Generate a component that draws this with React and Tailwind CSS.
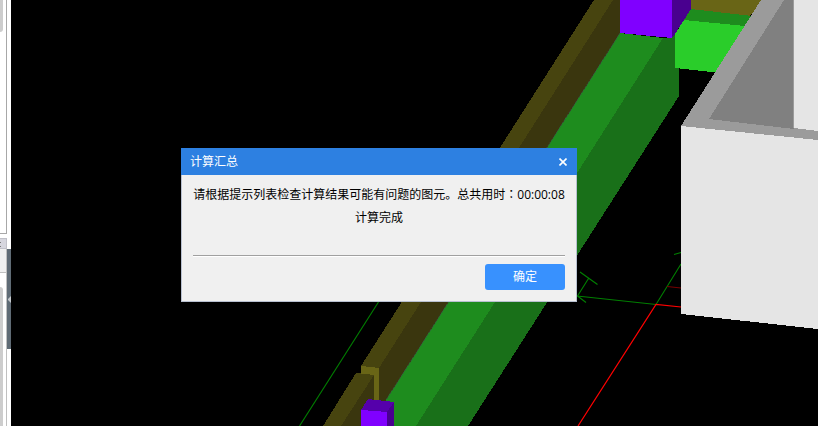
import React, { useState } from 'react';


const SidePanel = () => {
    return (
        <div className="flex w-[11px] shrink-0 bg-white">
            <div className="flex w-[7px] flex-col">
                <div className="h-[234px] border-r border-b border-[#a8a8a8]">
                    <div className="h-8 w-[3px] rounded-br-sm bg-[#cdcdcd]"></div>
                </div>
                <div className="mt-1 h-[11px] border-t border-r border-b border-[#c0c0c8] bg-[#d6d6de]">
                    <div className="mt-[3px] h-px w-px bg-[#777777]"></div>
                    <div className="mt-[3px] h-px w-px bg-[#777777]"></div>
                </div>
                <div className="h-6 border-r border-b border-[#c0c0c0] bg-[#f0f0f0]"></div>
                <div className="grow border-r border-[#c0c0c0] pt-[14px]">
                    <div className="h-full w-[3px] rounded-tr-sm bg-[#cdcdcd]"></div>
                </div>
            </div>
            {/* Splitter */}
            <div className="w-1 pt-[249px]">
                <button aria-label="收起" className="flex h-[100px] w-1 items-center justify-end bg-[#5f6b75]">
                    <svg className="h-[7px] w-[3px]" viewBox="0 0 3 7">
                        <path d="M3 0V7L0 4V3Z" fill="#c4c8cc" />
                    </svg>
                </button>
            </div>
        </div>
    );
};

const Scene = () => {
    return (
        <svg className="min-w-0 grow bg-black" viewBox="11 0 807 426" preserveAspectRatio="xMinYMin slice">
            {/* axes */}
            <g fill="none" stroke="#008000" strokeWidth="1.1">
                <path d="M378.500 302L299.500 426" />
                <path d="M577 296L656 304.500L681 264" />
                <path d="M577.500 296L588.500 278.500M580 272L597.500 284.500M577.500 296L586 302.500M674 254.500L681 252.500" />
            </g>
            <path d="M667 286.500L681 288" stroke="#780000" fill="none" />
            <path d="M681 307L656 304.500L578 426" stroke="#ff0000" strokeWidth="1.200" fill="none" />

            <g shapeRendering="crispEdges">
                {/* long wall */}
                <path d="M594 0H613L379 368L361 366Z" fill="#47440f" />
                <path d="M613 0H620V33L386 401L379 410V368Z" fill="#3a360e" />
                <path d="M361 366L379 368V410H374V376L361 374Z" fill="#696516" />
                <path d="M356 373L374 375L341 426H323Z" fill="#47440f" />
                <path d="M374 375V426H341Z" fill="#3a360e" />

                {/* green beam */}
                <path d="M620 33L663 38L592 150L416 426H370L386 400Z" fill="#1e8c1e" />
                <path d="M663 38L672 37L679 30V96L468 426H416Z" fill="#197019" />
                <path d="M690 0H765L750 16L690 10Z" fill="#696516" />
                <path d="M691 9L752 16L745 27L680 20Z" fill="#1e8c1e" />
                <path d="M684 20L745 26L740 75L675 68V34Z" fill="#2acd2a" />

                {/* columns */}
                <path d="M620 0H672V38L620 33Z" fill="#8000ff" />
                <path d="M672 0H691V9L673 37H672Z" fill="#49008f" />
                <path d="M361 410L368 399L394 402L387 412Z" fill="#5500ab" />
                <path d="M361 410L387 412V426H361Z" fill="#8000ff" />
                <path d="M387 412L394 402V426H387Z" fill="#49008f" />

                {/* grey box */}
                <path d="M761 0H818V141L681 126Z" fill="#9b9b9b" />
                <path d="M784 0H794V129L709 119Z" fill="#808080" />
                <path d="M794 0H818V131L794 128Z" fill="#e5e5e5" />
                <path d="M681 126L818 140V329L681 314Z" fill="#e5e5e5" />
            </g>
            <path d="M793.500 0V128" stroke="#9b9b9b" fill="none" />
            <path d="M620 33L386 400" stroke="#38503f" strokeDasharray="2 1" fill="none" />
        </svg>
    );
};

const ResultDialog = ({ onClose }) => {
    return (
        <div role="dialog" aria-labelledby="dialog-title" className="absolute top-[148px] left-[181px] w-[396px] border-b border-[#b8c0d0] bg-[#f0f0f0] text-xs text-black">
            <div className="flex h-[27px] items-center justify-between bg-[#2d80e1] pr-[6px] pl-[9px] text-white">
                <h1 id="dialog-title">计算汇总</h1>
                <button aria-label="关闭" onClick={onClose} className="p-1">
                    <svg className="size-2" viewBox="0 0 8 8" fill="none" stroke="currentColor" strokeWidth="1.600">
                        <path d="M0.500 0.500L7.500 7.500M7.500 0.500L0.500 7.500" />
                    </svg>
                </button>
            </div>
            <div className="border-x border-[#b8c0d0] px-[11px] pt-[7px] pb-[11px]">
                <div className="text-center leading-[23px] whitespace-nowrap">
                    <p>请根据提示列表检查计算结果可能有问题的图元。总共用时<span className="font-['Noto_Sans_CJK_TC',sans-serif]">：</span>00:00:08</p>
                    <p>计算完成</p>
                </div>
                <div className="mt-[26px] h-[2px] border-t border-[#a0a0a0] bg-white"></div>
                <div className="mt-[7px] flex justify-end">
                    <button onClick={onClose} className="h-[26px] w-20 rounded-[3px] bg-[#3891fe] text-white">确定</button>
                </div>
            </div>
        </div>
    );
};

const App = () => {
    const [open, setOpen] = useState(true);

    return (
        <div className="relative flex h-screen overflow-hidden bg-black font-['Open_Sans','Noto_Sans_CJK_SC',sans-serif]">
            <SidePanel />
            <Scene />
            {open && <ResultDialog onClose={() => setOpen(false)} />}
        </div>
    );
};

export default App;
